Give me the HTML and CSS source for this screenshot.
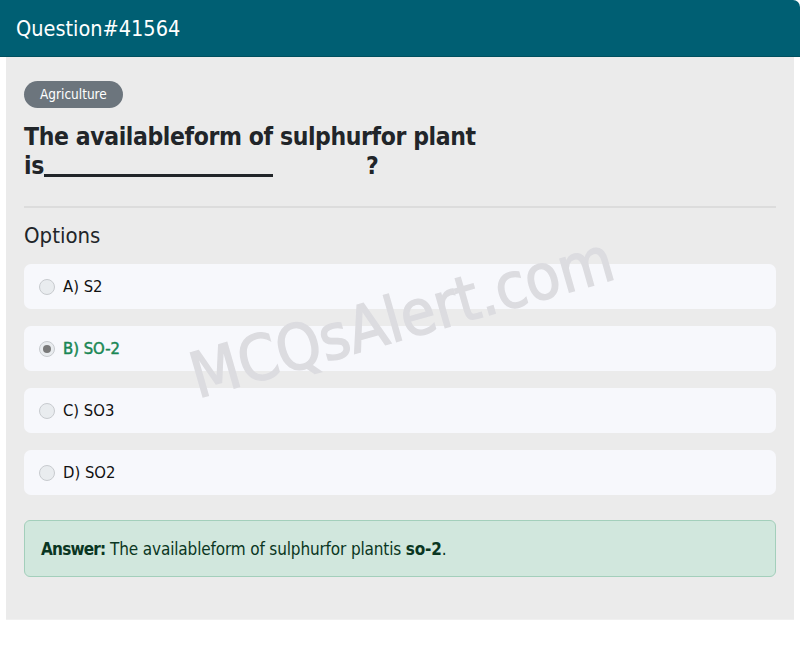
FILE: index.html
```html
<!DOCTYPE html>
<html>
<head>
<meta charset="utf-8">
<link rel="stylesheet" href="styles.css">
</head>
<body>
<div class="card">
  <div class="card-header">Question#41564</div>
  <div class="card-body">
    <span class="badge">Agriculture</span>
    <h2 class="question">The availableform of sulphurfor plant is<span class="blank"></span><span class="gap"></span>?</h2>
    <hr class="divider">
    <div class="options-title">Options</div>
    <div class="options">
      <div class="option"><span class="radio"></span><span class="label">A) S2</span></div>
      <div class="option correct"><span class="radio checked"></span><span class="label">B) SO-2</span></div>
      <div class="option"><span class="radio"></span><span class="label">C) SO3</span></div>
      <div class="option"><span class="radio"></span><span class="label">D) SO2</span></div>
      <div class="watermark">MCQsAlert.com</div>
    </div>
    <div class="answer"><b class="answer-key">Answer:</b> The availableform of sulphurfor plantis <b>so-2</b>.</div>
  </div>
  <div class="card-footer"></div>
</div>
</body>
</html>
```
FILE: styles.css
```css
html, body {
  margin: 0;
  padding: 0;
  background: #ffffff;
}
body {
  font-family: "DejaVu Sans Condensed", "DejaVu Sans", sans-serif;
  color: #212529;
}
.card {
  width: 800px;
}
.card-header {
  background: #005f73;
  color: #ffffff;
  height: 57px;
  box-sizing: border-box;
  padding: 0 16px;
  display: flex;
  align-items: center;
  font-size: 21.5px;
  border-top-right-radius: 7px;
  border-bottom: 1px solid #00505f;
}
.card-body {
  margin: 0 6px;
  background: #ebebeb;
  padding: 24px 18px 42px;
  height: 562px;
  box-sizing: border-box;
}
.badge {
  display: inline-block;
  background: #6c757d;
  color: #ffffff;
  font-size: 13.5px;
  line-height: 27px;
  padding: 0 16px;
  border-radius: 14px;
}
.question {
  font-size: 24.5px;
  font-weight: bold;
  line-height: 29px;
  margin: 14px 0 0;
  width: 470px;
  letter-spacing: -0.4px;
  color: #212529;
}
.blank {
  display: inline-block;
  width: 229px;
  height: 3px;
  background: #212529;
  vertical-align: -3px;
}
.gap {
  display: inline-block;
  width: 93px;
}
.divider {
  border: 0;
  border-top: 2px solid #dcdcdc;
  margin: 26px 0 0;
}
.options-title {
  font-size: 22px;
  margin-top: 15px;
  line-height: 26px;
}
.options {
  position: relative;
  margin-top: 15px;
  display: flex;
  flex-direction: column;
  gap: 17px;
}
.option {
  background: #f7f8fc;
  border-radius: 7px;
  height: 45px;
  display: flex;
  align-items: center;
  padding-left: 15px;
  font-size: 16.5px;
  color: #111111;
}
.radio {
  width: 14px;
  height: 14px;
  border-radius: 50%;
  border: 1px solid #c8cbcf;
  background: #e9ecef;
  margin-right: 8px;
  position: relative;
  box-sizing: content-box;
}
.radio.checked::after {
  content: "";
  position: absolute;
  left: 3px;
  top: 3px;
  width: 8px;
  height: 8px;
  border-radius: 50%;
  background: #7a7a7a;
}
.option.correct .label {
  color: #198754;
  -webkit-text-stroke: 0.5px #198754;
}
.watermark {
  position: absolute;
  left: 178px;
  top: 76px;
  font-size: 63px;
  color: #dcdce0;
  -webkit-text-stroke: 1.4px #dcdce0;
  transform: rotate(-16deg);
  transform-origin: left bottom;
  white-space: nowrap;
  pointer-events: none;
}
.answer {
  margin-top: 25px;
  background: #d1e7dd;
  border: 1px solid #a3cfbb;
  border-radius: 6px;
  color: #0a3622;
  height: 57px;
  box-sizing: border-box;
  padding: 0 16px;
  display: flex;
  align-items: center;
  font-size: 17px;
  letter-spacing: -0.15px;
  white-space: pre;
}
.answer-key {
  letter-spacing: -0.8px;
}
.card-footer {
  margin: 0 6px;
  height: 6px;
  background: #ffffff;
  border-top: 1px solid #f0f0f0;
}
```
